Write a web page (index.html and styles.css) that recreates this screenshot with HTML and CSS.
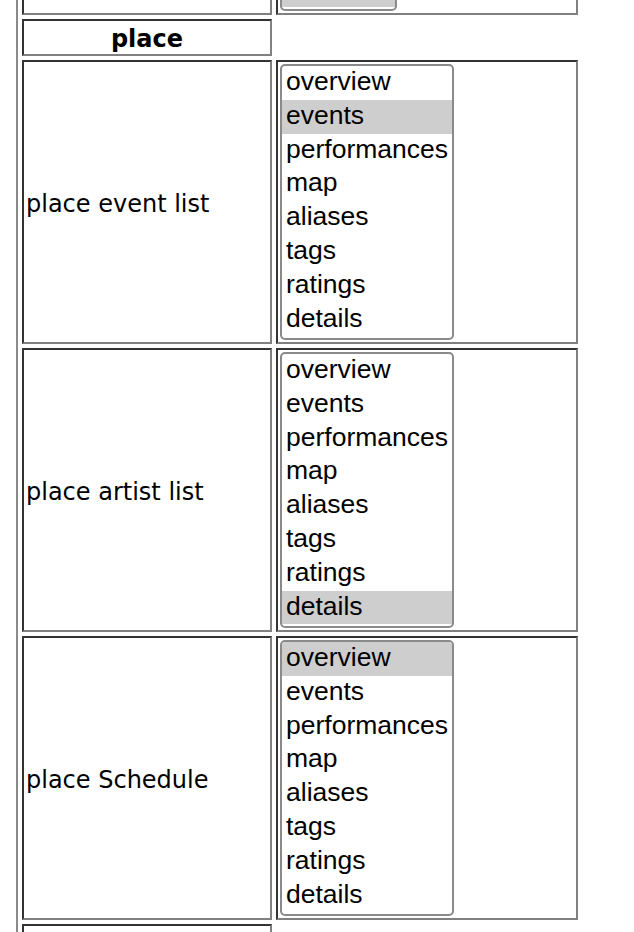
FILE: index.html
```html
<!DOCTYPE html>
<html lang="en">
<head>
    <meta charset="UTF-8">
    <meta name="viewport" content="width=device-width, initial-scale=1.0">
    <title>Default tab settings</title>
    <link rel="stylesheet" href="styles.css">
</head>
<body>
    <div class="frame">
        <table class="tabs">
            <tr>
                <td class="name">&nbsp;</td>
                <td class="pick">
                    <select class="short" multiple size="8">
                        <option>overview</option>
                        <option>lineup</option>
                        <option>map</option>
                        <option>tags</option>
                        <option>photos</option>
                        <option>ratings</option>
                        <option>reviews</option>
                        <option selected>details</option>
                    </select>
                </td>
            </tr>
            <tr>
                <th class="section">place</th>
            </tr>
            <tr>
                <td class="name">place event list</td>
                <td class="pick">
                    <select multiple size="8">
                        <option>overview</option>
                        <option selected>events</option>
                        <option>performances</option>
                        <option>map</option>
                        <option>aliases</option>
                        <option>tags</option>
                        <option>ratings</option>
                        <option>details</option>
                    </select>
                </td>
            </tr>
            <tr>
                <td class="name">place artist list</td>
                <td class="pick">
                    <select multiple size="8">
                        <option>overview</option>
                        <option>events</option>
                        <option>performances</option>
                        <option>map</option>
                        <option>aliases</option>
                        <option>tags</option>
                        <option>ratings</option>
                        <option selected>details</option>
                    </select>
                </td>
            </tr>
            <tr>
                <td class="name">place Schedule</td>
                <td class="pick">
                    <select multiple size="8">
                        <option selected>overview</option>
                        <option>events</option>
                        <option>performances</option>
                        <option>map</option>
                        <option>aliases</option>
                        <option>tags</option>
                        <option>ratings</option>
                        <option>details</option>
                    </select>
                </td>
            </tr>
            <tr>
                <th class="section">&nbsp;</th>
            </tr>
        </table>
    </div>
</body>
</html>
```

FILE: styles.css
```css
html, body {
    margin: 0;
    height: 932px;
    overflow: hidden;
    background: #fff;
}
.frame {
    margin-left: 16px;
    border-left: 2px solid #8a8a8a;
    min-height: 100%;
}
.tabs {
    border-collapse: separate;
    border-spacing: 4px;
    margin-top: -273px;
    font-family: "DejaVu Sans", Verdana, sans-serif;
    font-size: 24px;
    color: #000;
}
.tabs td,
.tabs th {
    box-sizing: border-box;
    border: 2px solid;
    border-color: #333 #808080 #808080 #333;
    padding: 2px;
}
.name {
    width: 250px;
    height: 284px;
    vertical-align: middle;
    text-align: left;
}
.tabs td.name {
    padding: 4px 2px 0;
}
.pick {
    width: 302px;
    vertical-align: top;
}
.section {
    width: 250px;
    line-height: 29px;
    font-weight: bold;
    text-align: center;
}
.tabs th.section {
    padding: 4px 2px 0;
}
.pick select {
    display: block;
    box-sizing: border-box;
    width: 174px;
    height: 276px;
    margin: 0;
    padding: 0;
    border: 2px solid #8a8a8a;
    border-radius: 5px;
    overflow: hidden;
    background: #fff;
    color: #000;
    font-family: "Liberation Sans", Arial, sans-serif;
    font-size: 26.5px;
}
.pick select.short {
    width: 117px;
}
.pick option {
    padding: 0 4px 2px;
    line-height: 32px;
}
.pick option:checked {
    background: linear-gradient(#cecece, #cecece);
    color: #000;
}
```
